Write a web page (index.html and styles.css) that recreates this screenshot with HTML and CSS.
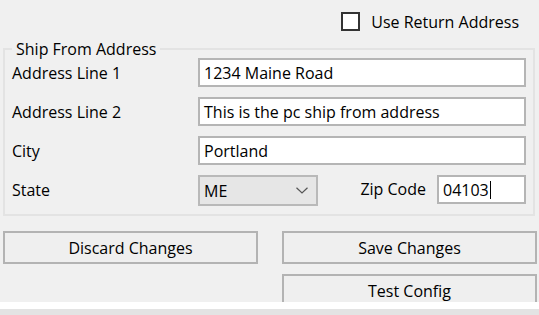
FILE: index.html
```html
<!DOCTYPE html>
<html>
<head>
<meta charset="utf-8">
<link rel="stylesheet" href="styles.css">
</head>
<body>
<div class="window">
  <div class="top-row">
    <label class="check"><span class="box"></span><span>Use Return Address</span></label>
  </div>
  <fieldset class="group">
    <legend>Ship From Address</legend>
    <div class="form">
      <span class="lbl">Address Line 1</span>
      <div class="tb">1234 Maine Road</div>
      <span class="lbl">Address Line 2</span>
      <div class="tb">This is the pc ship from address</div>
      <span class="lbl">City</span>
      <div class="tb">Portland</div>
      <span class="lbl">State</span>
      <div class="last">
        <div class="combo"><span>ME</span>
          <svg class="chev" width="12" height="7" viewBox="0 0 12 7"><path d="M0.5 0.8 L6 6 L11.5 0.8" fill="none" stroke="#555" stroke-width="1.2"/></svg>
        </div>
        <span class="lbl zip-lbl">Zip Code</span>
        <div class="tb zip">04103<span class="caret"></span></div>
      </div>
    </div>
  </fieldset>
  <div class="buttons">
    <div class="btn">Discard Changes</div>
    <div class="btn">Save Changes</div>
    <div></div>
    <div class="btn">Test Config</div>
  </div>
</div>
<div class="strip-white"></div>
<div class="strip-gray"></div>
</body>
</html>
```
FILE: styles.css
```css
* { box-sizing: border-box; }
html, body { margin: 0; padding: 0; }
body {
  background: #f0f0f0;
  font-family: "Open Sans", "Noto Sans", sans-serif;
  font-size: 16px;
  color: #000;
  width: 539px;
  height: 315px;
  overflow: hidden;
}
.window {
  height: 302px;
  overflow: hidden;
}
.top-row {
  display: flex;
  justify-content: flex-end;
  padding: 12px 20px 0 0;
  height: 42px;
}
.check {
  display: flex;
  align-items: center;
  gap: 11px;
  height: 19px;
}
.box {
  width: 19px;
  height: 19px;
  border: 2px solid #333;
  background: #fff;
}
.group {
  margin: 0 4px 0 3px;
  border: 2px solid #e3e3e3;
  padding: 0 8px 10px 7px;
  min-width: 0;
}
.group legend {
  padding: 0 4px;
  margin-left: 0;
  line-height: 14px;
}
.form {
  display: grid;
  grid-template-columns: 186px 328px;
  grid-auto-rows: 29px;
  row-gap: 10px;
  align-items: center;
  margin-top: 2px;
}
.lbl { line-height: 20px; }
.tb {
  height: 29px;
  border: 2px solid #b5b5b5;
  background: #fff;
  padding: 0 4px;
  display: flex;
  align-items: center;
  white-space: nowrap;
}
.last {
  display: flex;
  align-items: flex-start;
  height: 29px;
}
.combo {
  width: 120px;
  height: 31px;
  border: 2px solid #b9b9b9;
  background: #e6e6e6;
  display: flex;
  align-items: center;
  justify-content: space-between;
  padding: 0 8px 0 4px;
}
.zip-lbl { margin-left: auto; margin-top: 4px; }
.zip {
  margin-left: 11px;
  width: 89px;
}
.caret {
  display: inline-block;
  width: 1px;
  height: 18px;
  background: #000;
  margin-left: 1px;
}
.buttons {
  display: grid;
  grid-template-columns: 255px 255px;
  column-gap: 24px;
  row-gap: 10px;
  margin: 15px 0 0 3px;
}
.btn {
  height: 33px;
  border: 2px solid #b3b3b3;
  background: #efefef;
  display: flex;
  align-items: center;
  justify-content: center;
}
.strip-white { height: 7px; background: #fff; }
.strip-gray { height: 6px; background: #e3e3e3; }
```
